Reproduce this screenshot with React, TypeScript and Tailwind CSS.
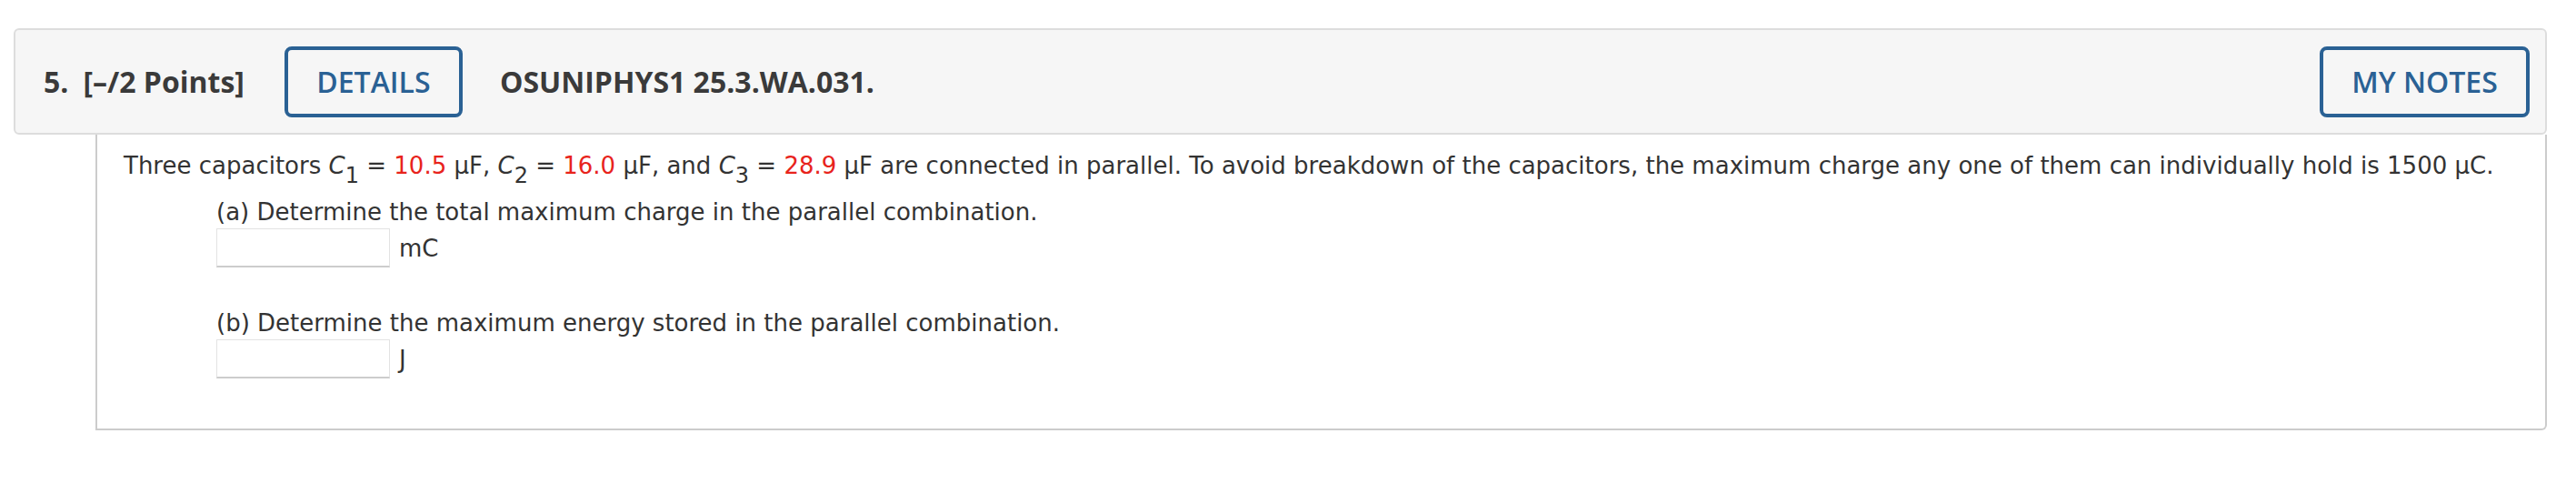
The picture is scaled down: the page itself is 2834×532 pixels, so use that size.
import React from "react";

const RED = "text-[#e8231c]";

const Sub = ({ children }: { children: React.ReactNode }) => (
  <sub className="text-[24px] -bottom-[10px]">{children}</sub>
);

const AnswerBox = ({ unit }: { unit: string }) => (
  <div className="flex items-center">
    <input
      type="text"
      className="h-[43px] w-[191px] border border-[#e3e3e3] border-b-2 border-b-[#cdcdcd] bg-white outline-none"
    />
    <span className="ml-[10px]">{unit}</span>
  </div>
);

export default function App() {
  return (
    <div className="h-[532px] w-[2834px] bg-white pt-[31px] pl-[15px] pr-[32px]">
      {/* Header */}
      <div
        className="flex h-[117px] items-center rounded-[6px] border-2 border-[#dddddd] bg-[#f6f6f6] pl-[31px] pr-[17px] text-[#3a3a3a]"
        style={{ fontFamily: '"Open Sans", sans-serif' }}
      >
        <div className="text-[32px] font-bold">
          <span className="mr-[16px]">5.</span>
          <span>[–/2 Points]</span>
        </div>
        <button className="ml-[44px] h-[78px] w-[196px] rounded-[8px] border-4 border-[#2a6194] text-[32px] font-semibold text-[#2a6194]">
          DETAILS
        </button>
        <div className="ml-[41px] text-[32px] font-bold">OSUNIPHYS1 25.3.WA.031.</div>
        <button className="ml-auto h-[78px] w-[231px] rounded-[8px] border-4 border-[#2a6194] text-[32px] font-semibold text-[#2a6194]">
          MY NOTES
        </button>
      </div>

      {/* Question body */}
      <div
        className="ml-[90px] h-[325px] rounded-br-[6px] border-x-2 border-b-2 border-[#cccccc] pt-[16px] pl-[29px] text-[26px] leading-[36px] text-[#333333]"
        style={{ fontFamily: '"DejaVu Sans", Verdana, sans-serif' }}
      >
        <p>
          Three capacitors <i>C</i>
          <Sub>1</Sub> = <span className={RED}>10.5</span> µF, <i>C</i>
          <Sub>2</Sub> = <span className={RED}>16.0</span> µF, and <i>C</i>
          <Sub>3</Sub> = <span className={RED}>28.9</span> µF are connected in parallel. To avoid
          breakdown of the capacitors, the maximum charge any one of them can individually hold is
          1500 µC.
        </p>

        <div className="ml-[102px]">
          <p className="mt-[15px]">(a) Determine the total maximum charge in the parallel combination.</p>
          <AnswerBox unit="mC" />

          <p className="mt-[43px]">(b) Determine the maximum energy stored in the parallel combination.</p>
          <AnswerBox unit="J" />
        </div>
      </div>
    </div>
  );
}
